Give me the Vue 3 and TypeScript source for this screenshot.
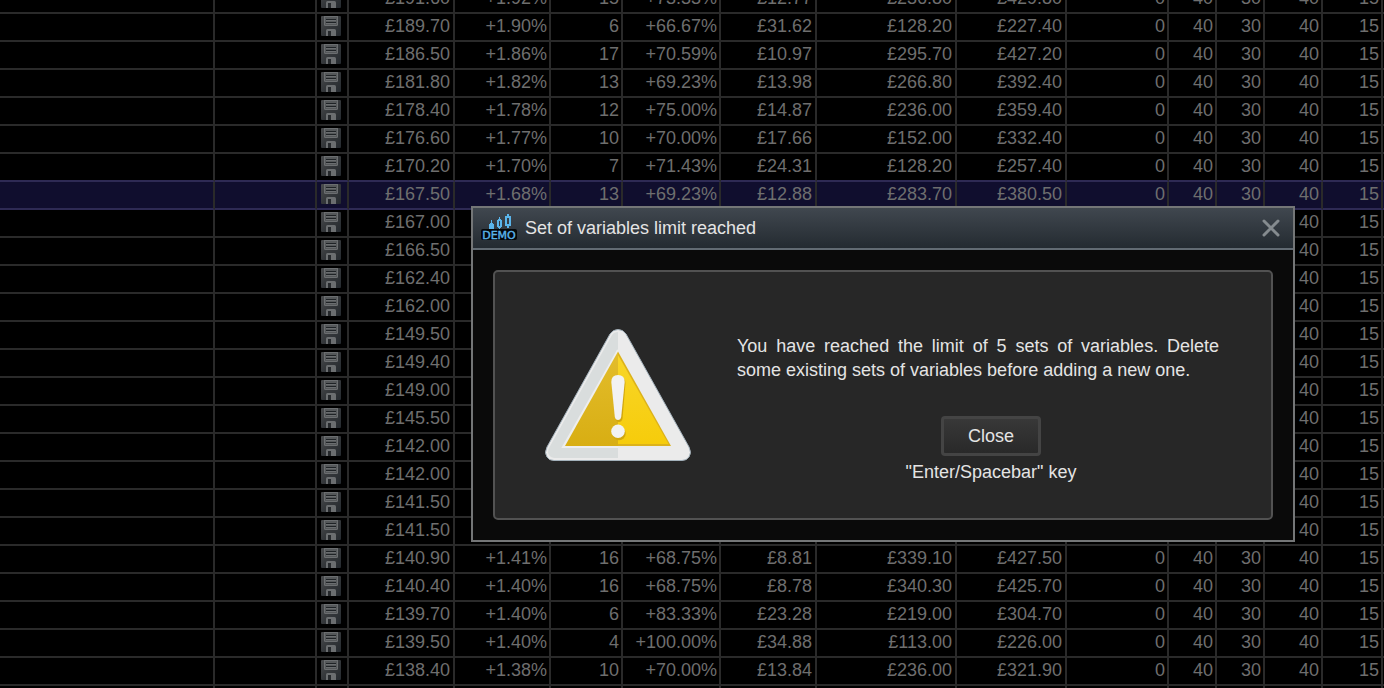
<script setup lang="ts">
import { ref } from 'vue'

interface Row {
  profit: string
  stats: string[]
  selected?: boolean
}

const row = (profit: string, ...stats: string[]): Row => ({ profit, stats })

const blank = ['', '', '', '', '', '', '', '', '']

const rows: Row[] = [
  row('£191.60', '+1.92%', '15', '+73.33%', '£12.77', '£236.80', '£429.80', '0', '40', '30'),
  row('£189.70', '+1.90%', '6', '+66.67%', '£31.62', '£128.20', '£227.40', '0', '40', '30'),
  row('£186.50', '+1.86%', '17', '+70.59%', '£10.97', '£295.70', '£427.20', '0', '40', '30'),
  row('£181.80', '+1.82%', '13', '+69.23%', '£13.98', '£266.80', '£392.40', '0', '40', '30'),
  row('£178.40', '+1.78%', '12', '+75.00%', '£14.87', '£236.00', '£359.40', '0', '40', '30'),
  row('£176.60', '+1.77%', '10', '+70.00%', '£17.66', '£152.00', '£332.40', '0', '40', '30'),
  row('£170.20', '+1.70%', '7', '+71.43%', '£24.31', '£128.20', '£257.40', '0', '40', '30'),
  {
    ...row('£167.50', '+1.68%', '13', '+69.23%', '£12.88', '£283.70', '£380.50', '0', '40', '30'),
    selected: true,
  },
  row('£167.00', ...blank),
  row('£166.50', ...blank),
  row('£162.40', ...blank),
  row('£162.00', ...blank),
  row('£149.50', ...blank),
  row('£149.40', ...blank),
  row('£149.00', ...blank),
  row('£145.50', ...blank),
  row('£142.00', ...blank),
  row('£142.00', ...blank),
  row('£141.50', ...blank),
  row('£141.50', ...blank),
  row('£140.90', '+1.41%', '16', '+68.75%', '£8.81', '£339.10', '£427.50', '0', '40', '30'),
  row('£140.40', '+1.40%', '16', '+68.75%', '£8.78', '£340.30', '£425.70', '0', '40', '30'),
  row('£139.70', '+1.40%', '6', '+83.33%', '£23.28', '£219.00', '£304.70', '0', '40', '30'),
  row('£139.50', '+1.40%', '4', '+100.00%', '£34.88', '£113.00', '£226.00', '0', '40', '30'),
  row('£138.40', '+1.38%', '10', '+70.00%', '£13.84', '£236.00', '£321.90', '0', '40', '30'),
  { profit: '', stats: blank },
]

const open = ref(true)
const close = () => {
  open.value = false
}
</script>

<template>
  <main class="screen" @keydown.enter="close">
    <svg class="defs" aria-hidden="true">
      <defs>
        <linearGradient id="disk-body" x1="0" y1="0" x2="1" y2="1">
          <stop offset="0" stop-color="#4a4c4e" />
          <stop offset="0.5" stop-color="#34373a" />
          <stop offset="1" stop-color="#252a2f" />
        </linearGradient>
        <symbol id="disk" viewBox="0 0 20 20">
          <rect width="20" height="20" rx="1" fill="url(#disk-body)" />
          <path d="M3 0h14v8.500q0 1.500-1.500 1.500h-11Q3 10 3 8.500z" fill="#6b6e70" />
          <path d="M4 1h12v7.500q0 .5-.5.500h-11Q4 9 4 8.500z" fill="#55585a" />
          <path d="M5 3h10v1H5zM5 6h10v1H5z" fill="#1f2326" />
          <path d="M5 4h10v1H5zM5 7h10v1H5z" fill="#6b6e70" />
          <path d="M5 20v-5.500q0-1.500 1.500-1.500h7q1.500 0 1.500 1.500V20z" fill="#6b6e70" />
          <path d="M7 15h3v5H7z" fill="#26292c" />
        </symbol>
      </defs>
    </svg>

    <table class="results" aria-label="Results">
      <colgroup>
        <col />
        <col class="w102" />
        <col class="w32" />
        <col class="w106" />
        <col class="w96" />
        <col class="w72" />
        <col class="w98" />
        <col class="w96" />
        <col class="w140" />
        <col class="w110" />
        <col class="w102" />
        <col class="w48" />
        <col class="w48" />
        <col class="w58" />
        <col class="w60" />
        <col class="w1" />
      </colgroup>
      <tbody>
        <tr v-for="(r, i) in rows" :key="i" :class="{ selected: r.selected, before: rows[i + 1]?.selected }">
          <td></td>
          <td></td>
          <td class="save">
            <button v-if="r.profit" type="button" aria-label="Save set">
              <svg width="20" height="20" aria-hidden="true"><use href="#disk" /></svg>
            </button>
          </td>
          <td>{{ r.profit }}</td>
          <td v-for="(s, j) in r.stats" :key="j" :class="{ tight: !s.startsWith('£') }">{{ s }}</td>
          <td class="tight">{{ r.profit && '40' }}</td>
          <td class="tight">{{ r.profit && '15' }}</td>
          <td class="edge"></td>
        </tr>
      </tbody>
    </table>

    <section v-if="open" class="dialog" role="dialog" aria-labelledby="dialog-title">
      <header>
        <svg class="logo" width="36" height="30" viewBox="0 0 36 30" role="img" aria-label="Demo">
          <g fill="#5ab4ea">
            <path d="M8 16v-5h1v-1h1V7h1v3h1v1h1v5z" />
            <path d="M18 4h1v2h1v1h1v7h-1v1h-1v1h-1v-1h-1v-1h-1V7h1V6h1zM18 8v5h1V8z" fill-rule="evenodd" />
            <path d="M26 1h2v2h2v10h-2v2h-2v-2h-2V3h2zM26 5v6h2V5z" fill-rule="evenodd" />
          </g>
          <rect y="16" width="36" height="11" rx="2" fill="#030608" />
          <text x="18" y="26" text-anchor="middle" class="logo-text">DEMO</text>
        </svg>
        <h1 id="dialog-title">Set of variables limit reached</h1>
        <button class="dismiss" type="button" aria-label="Dismiss" @click="close">
          <svg width="18" height="18" viewBox="0 0 18 18" aria-hidden="true">
            <path d="M2 2l14 14M16 2L2 16" stroke="#858b8f" stroke-width="3" stroke-linecap="round" />
          </svg>
        </button>
      </header>
      <div class="panel">
        <svg class="warning" width="146" height="132" viewBox="0 0 146 132" role="img" aria-label="Warning">
          <defs>
            <linearGradient id="dark-yellow" x1="0" y1="0" x2="0" y2="1">
              <stop offset="0" stop-color="#e3bd2c" />
              <stop offset="1" stop-color="#d8ae13" />
            </linearGradient>
            <linearGradient id="bright-yellow" x1="0" y1="0" x2="0" y2="1">
              <stop offset="0" stop-color="#f8d629" />
              <stop offset="1" stop-color="#f6cc0b" />
            </linearGradient>
          </defs>
          <path
            d="M65 5Q68 .5 73 .5T81 5L144 118Q147 124 144 128 141.500 131.500 137 131.500H9Q4 131.500 2 128-1 124 2 118z"
            fill="#ebebeb"
            stroke="#a3b1bb"
          />
          <path d="M73 3Q69 3 67 6L4 119Q2 123 4 126 6 129 10 129H73V118H18L73 21z" fill="#d9dddd" />
          <path d="M73 21L18 118H73" fill="none" stroke="#eeeeee" stroke-width="2" />
          <path d="M73 22.500V117H20z" fill="url(#dark-yellow)" />
          <path d="M73 22.500L126 117H73z" fill="#dcb21a" />
          <path d="M73 26L123.500 115H73z" fill="url(#bright-yellow)" />
          <g fill="#d1a70f">
            <path d="M67.500 54Q67.500 48 74 48T80.500 54L77.500 90Q76.500 93 74 93T70.500 90z" />
            <circle cx="74" cy="104.500" r="6.700" />
          </g>
          <g fill="#f2f2f2">
            <path d="M66.300 53Q66.300 46 73 46T79.700 53L76.200 88Q75.500 91 73 91T69.800 88z" />
            <circle cx="73" cy="102.300" r="6.800" />
          </g>
        </svg>
        <div class="content">
          <p class="message">
            You have reached the limit of 5 sets of variables. Delete some existing sets of variables before adding a
            new one.
          </p>
          <button class="close" type="button" @click="close">Close</button>
          <p class="hint">"Enter/Spacebar" key</p>
        </div>
      </div>
    </section>
  </main>
</template>

<style>
html,
body {
  background: #000;
}
</style>

<style scoped>
.screen {
  position: relative;
  height: 100vh;
  overflow: hidden;
  background: #000;
  color: #6e6e6e;
  font: 18px/24px 'Liberation Sans', Arial, sans-serif;
}
.defs {
  position: absolute;
  width: 0;
  height: 0;
}
.results {
  width: 100%;
  margin-top: -14px;
  table-layout: fixed;
  border-collapse: separate;
  border-spacing: 0;
}
.w1 { width: 1px; }
.w32 { width: 32px; }
.w48 { width: 48px; }
.w58 { width: 58px; }
.w60 { width: 60px; }
.w72 { width: 72px; }
.w96 { width: 96px; }
.w98 { width: 98px; }
.w102 { width: 102px; }
.w106 { width: 106px; }
.w110 { width: 110px; }
.w140 { width: 140px; }
td {
  box-sizing: border-box;
  height: 28px;
  padding: 0 3px 2px 0;
  border-right: 2px solid #2a2a2a;
  border-bottom: 2px solid #2a2a2a;
  line-height: 24px;
  text-align: right;
  white-space: nowrap;
}
.tight {
  padding-right: 2px;
}
.save {
  padding: 0 6px 2px 0;
}
.save button {
  display: block;
  width: 20px;
  height: 20px;
  margin-left: auto;
  padding: 0;
  border: 0;
  background: none;
}
.save svg {
  display: block;
}
.edge {
  padding: 0;
  border-right: 0;
}
.selected td {
  background: #100e2e;
}
.selected td,
.before td {
  border-bottom-color: #2e2a54;
}
.dialog {
  position: absolute;
  top: 206px;
  left: 471px;
  box-sizing: border-box;
  width: 824px;
  border: 2px solid #747677;
  background: #0a0a0a;
  color: #e4e4e4;
}
header {
  display: flex;
  align-items: center;
  height: 40px;
  padding: 0 13px 0 8px;
  border-bottom: 2px solid #626b73;
  background: linear-gradient(#40474f, #242b31);
}
.logo-text {
  fill: #5ab4ea;
  stroke: #5ab4ea;
  stroke-width: 0.4px;
  font: 11px 'DejaVu Sans', sans-serif;
}
h1 {
  flex: 1;
  margin: 0 0 0 8px;
  font-size: 18px;
  font-weight: normal;
  line-height: 24px;
}
.dismiss {
  display: flex;
  padding: 0;
  border: 0;
  background: none;
}
.panel {
  display: flex;
  align-items: center;
  gap: 20px;
  box-sizing: border-box;
  min-height: 250px;
  margin: 20px;
  padding-left: 50px;
  border: 2px solid #525252;
  border-radius: 5px;
  background: #272727;
}
.warning {
  flex: none;
}
.content {
  flex: 1;
  display: flex;
  flex-direction: column;
  align-items: center;
  padding-top: 28px;
}
.message {
  margin: 0 52px 34px 26px;
  text-align: justify;
}
.close {
  box-sizing: border-box;
  min-width: 100px;
  height: 40px;
  padding: 0 20px;
  border: 3px solid #444;
  border-radius: 4px;
  background: linear-gradient(#383838, #292929);
  color: #e4e4e4;
  font: inherit;
}
.hint {
  margin: 4px 0 0;
}
</style>
